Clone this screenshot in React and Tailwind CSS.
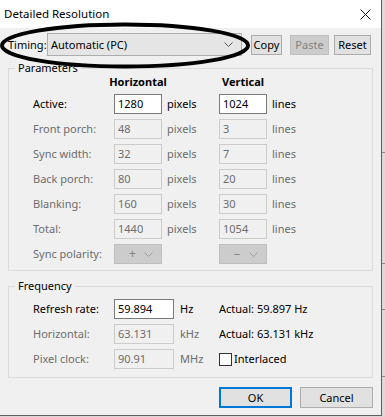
import React from "react";

function Chevron({ color = "#6d6d6d" }) {
  return (
    <svg width="9" height="5" viewBox="0 0 9 5" fill="none">
      <polyline points="0.5,0.5 4.5,4.5 8.5,0.5" stroke={color} strokeWidth="1" />
    </svg>
  );
}

function Field({ value, enabled, wide }) {
  return (
    <div
      className={`h-5 ${wide ? "w-[60px]" : "w-[48px]"} flex items-center px-[3px] border ${
        enabled ? "border-[#7a7a7a] bg-white text-black" : "border-[#cccccc] bg-[#f0f0f0] text-[#6d6d6d]"
      }`}
    >
      {value}
    </div>
  );
}

function ParamRow({ label, h, v, enabled }) {
  return (
    <div className={`flex items-center h-5 ${enabled ? "text-black" : "text-[#6d6d6d]"}`}>
      <span className="w-[81px] shrink-0">{label}</span>
      <Field value={h} enabled={enabled} />
      <span className="w-[57px] pl-[5px] shrink-0">pixels</span>
      <Field value={v} enabled={enabled} />
      <span className="pl-[5px]">lines</span>
    </div>
  );
}

function PolarityBox({ sym }) {
  return (
    <div className="h-5 w-[48px] flex items-center justify-between pl-[14px] pr-[8px] border border-[#bfbfbf] bg-[#cccccc] text-[#838383]">
      <span className="text-[12px]">{sym}</span>
      <Chevron color="#a0a0a0" />
    </div>
  );
}

export default function App() {
  return (
    <div className="w-[385px] h-[417px] flex bg-[#d9d9d9] font-['Noto_Sans',sans-serif] text-[11px] leading-[16px] text-black overflow-hidden">
      <div className="relative w-[382px] h-[416px] shrink-0 flex flex-col bg-[#f0f0f0] border-r border-b border-[#5f5f5f]">
        {/* title bar */}
        <div className="h-[28px] bg-white flex items-center justify-between pl-[4px] pr-[10px] shrink-0">
          <span className="text-[11.5px]">Detailed Resolution</span>
          <svg width="11" height="11" viewBox="0 0 11 11">
            <path d="M0.5 0.5 L10.5 10.5 M10.5 0.5 L0.5 10.5" stroke="#111" strokeWidth="1" />
          </svg>
        </div>

        {/* timing row */}
        <div className="flex items-center h-[25px] mt-[4px] pl-[8px] pr-[10px]">
          <span className="w-[39px] shrink-0">Timing:</span>
          <div className="h-[23px] w-[195px] shrink-0 flex items-center justify-between pl-[3px] pr-[8px] border border-[#adadad] bg-[#e5e5e5]">
            <span>Automatic (PC)</span>
            <Chevron color="#555" />
          </div>
          <div className="ml-auto flex items-center gap-[5px]">
            <div className="h-[20px] w-[31px] flex items-center justify-center border border-[#adadad] bg-[#e1e1e1]">Copy</div>
            <div className="ml-[3px] h-[20px] w-[39px] flex items-center justify-center border border-[#bfbfbf] bg-[#cccccc] text-[#838383]">Paste</div>
            <div className="h-[20px] w-[37px] flex items-center justify-center border border-[#adadad] bg-[#e1e1e1]">Reset</div>
          </div>
        </div>

        {/* parameters */}
        <fieldset className="mt-[4px] mx-[8px] w-[365px] border border-[#dcdcdc] pb-[6px]">
          <legend className="ml-[6px] px-[3px] h-[14px] leading-[14px]">Parameters</legend>
          <div className="pl-[24px]">
            <div className="flex items-center h-[14px] font-bold">
              <span className="w-[81px]" />
              <span className="w-[48px] flex justify-center">Horizontal</span>
              <span className="w-[57px]" />
              <span className="w-[48px] flex justify-center">Vertical</span>
            </div>
            <div className="mt-[5px] flex flex-col gap-[5px]">
              <ParamRow label="Active:" h="1280" v="1024" enabled />
              <ParamRow label="Front porch:" h="48" v="3" />
              <ParamRow label="Sync width:" h="32" v="7" />
              <ParamRow label="Back porch:" h="80" v="20" />
              <ParamRow label="Blanking:" h="160" v="30" />
              <ParamRow label="Total:" h="1440" v="1054" />
              <div className="flex items-center h-5 text-[#6d6d6d]">
                <span className="w-[81px]">Sync polarity:</span>
                <PolarityBox sym="+" />
                <span className="w-[57px]" />
                <PolarityBox sym="–" />
              </div>
            </div>
          </div>
        </fieldset>

        {/* frequency */}
        <fieldset className="mt-[8px] mx-[8px] w-[365px] border border-[#dcdcdc] pt-[6px] pb-[8px]">
          <legend className="ml-[6px] px-[3px] h-[14px] leading-[14px]">Frequency</legend>
          <div className="pl-[24px] flex flex-col gap-[5px]">
            <div className="flex items-center h-5">
              <span className="w-[81px]">Refresh rate:</span>
              <Field value="59.894" enabled wide />
              <span className="w-[45px] pl-[6px]">Hz</span>
              <span>Actual: 59.897 Hz</span>
            </div>
            <div className="flex items-center h-5">
              <span className="w-[81px] text-[#6d6d6d]">Horizontal:</span>
              <Field value="63.131" wide />
              <span className="w-[45px] pl-[6px] text-[#6d6d6d]">kHz</span>
              <span>Actual: 63.131 kHz</span>
            </div>
            <div className="flex items-center h-5">
              <span className="w-[81px] text-[#6d6d6d]">Pixel clock:</span>
              <Field value="90.91" wide />
              <span className="w-[45px] pl-[6px] text-[#6d6d6d]">MHz</span>
              <span className="w-[13px] h-[13px] border border-[#333] bg-white" />
              <span className="pl-[2px]">Interlaced</span>
            </div>
          </div>
        </fieldset>

        {/* buttons */}
        <div className="mt-[9px] pr-[8px] flex justify-end gap-[8px]">
          <div className="h-[21px] w-[73px] flex items-center justify-center border-2 border-[#0078d7] bg-[#e1e1e1]">OK</div>
          <div className="h-[21px] w-[73px] flex items-center justify-center border border-[#adadad] bg-[#e1e1e1]">Cancel</div>
        </div>

        {/* annotation ellipse */}
        <svg className="absolute left-0 top-0 pointer-events-none" width="260" height="75" viewBox="0 0 260 75">
          <ellipse cx="125" cy="45.5" rx="123" ry="21" fill="none" stroke="#000" strokeWidth="4" />
        </svg>
      </div>
      <div className="w-[3px] h-[417px] flex flex-col bg-[#dadada]">
        <div className="mt-[152px] h-px bg-[#8a8a8a]" />
        <div className="mt-[110px] h-px bg-[#8a8a8a]" />
        <div className="mt-[45px] h-px bg-[#8a8a8a]" />
        <div className="mt-[66px] h-px bg-[#8a8a8a]" />
      </div>
    </div>
  );
}
